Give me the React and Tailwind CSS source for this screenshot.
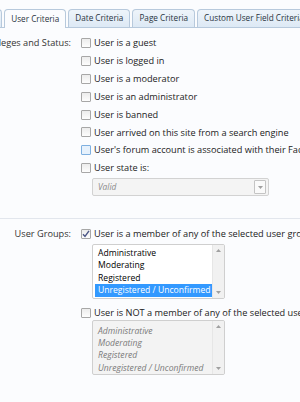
import React from 'react';

const font = { fontFamily: '"Open Sans", "Noto Sans", sans-serif' };

const tabs = ['Options', 'User Criteria', 'Date Criteria', 'Page Criteria', 'Custom User Field Criteria'];

const statusRows = [
  'User is a guest',
  'User is logged in',
  'User is a moderator',
  'User is an administrator',
  'User is banned',
  'User arrived on this site from a search engine',
  "User's forum account is associated with their Facebook account",
  'User state is:',
];

const groups = ['Administrative', 'Moderating', 'Registered', 'Unregistered / Unconfirmed'];

function Box({ checked, hover }) {
  return (
    <span
      className={`relative flex h-[10px] w-[10px] shrink-0 items-center justify-center rounded-[1px] border ${
        hover ? 'border-[#7fb0e0] bg-[#e6f1fc]' : 'border-[#a7a7a7] bg-gradient-to-b from-[#ececec] to-[#fdfdfd]'
      }`}
    >
      {checked && (
        <svg width="8" height="8" viewBox="0 0 8 8" className="absolute">
          <path d="M1 4.2 L3 6.4 L7 0.8" fill="none" stroke="#4a5585" strokeWidth="1.4" />
        </svg>
      )}
    </span>
  );
}

function Row({ label, checked, hover }) {
  return (
    <div className="flex h-[17.9px] items-center gap-[3px] whitespace-nowrap">
      <Box checked={checked} hover={hover} />
      <span>{label}</span>
    </div>
  );
}

function Arrow({ up }) {
  return (
    <svg width="5" height="3" viewBox="0 0 5 3">
      <path d={up ? 'M0 3 L2.5 0 L5 3 Z' : 'M0 0 L2.5 3 L5 0 Z'} fill="#a0a0a0" />
    </svg>
  );
}

function ListBox({ disabled }) {
  return (
    <div
      className={`flex h-[55px] w-[133px] overflow-hidden rounded-[2px] border border-[#cfcfcf] ${
        disabled ? 'bg-[#f3f3f3]' : 'bg-white'
      }`}
    >
      <div className={`flex-1 pl-[2px] text-[8.6px] ${disabled ? 'pt-[4px] italic text-[#7a7a7a]' : 'pt-[2px] text-black'}`}>
        {groups.map((g, i) => (
          <div
            key={g}
            className={`flex h-[12.4px] items-center pl-[3px] whitespace-nowrap ${
              !disabled && i === 3 ? 'bg-[#3399ff] text-white' : ''
            }`}
          >
            {g}
          </div>
        ))}
      </div>
      <div className="flex w-[12px] flex-col items-center justify-between border-l border-[#e6e6e6] bg-[#f1f1f1] py-[4px]">
        <Arrow up />
        <Arrow />
      </div>
    </div>
  );
}

export default function App() {
  return (
    <div className="h-[402px] w-[300px] overflow-hidden bg-[#fbfcfe] text-[9.2px] text-[#222]" style={font}>
      <div className="flex h-[28px] items-end border-b border-[#b7c9dc] pt-[10px]">
        <div className="ml-[-42px] flex gap-[2px]">
          {tabs.map((t, i) => (
            <div
              key={t}
              className={`flex h-[18px] items-center whitespace-nowrap rounded-t-[4px] border border-[#b7c9dc] px-[6px] text-[8.2px] text-[#2a3441] ${
                i === 1 ? 'mb-[-1px] h-[19px] border-b-0 bg-[#fbfcfe]' : 'border-b-0 bg-gradient-to-b from-[#eef4fa] to-[#dde9f5]'
              }`}
            >
              {t}
            </div>
          ))}
        </div>
      </div>

      <div className="flex gap-[10px] pt-[6px]">
        <div className="flex h-[17.9px] w-[71px] shrink-0 items-center justify-end whitespace-nowrap text-[#333]">
          Privileges and Status:
        </div>
        <div className="flex flex-col">
          {statusRows.map((r, i) => (
            <Row key={r} label={r} hover={i === 6} />
          ))}
          <div className="ml-[11px] mt-[1px] flex h-[18px] w-[177px] items-center justify-between rounded-[2px] border border-[#d2d2d2] bg-[#f4f4f4] pl-[5px] pr-[2px]">
            <span className="text-[8.4px] italic text-[#8a8a8a]">Valid</span>
            <span className="flex h-[14px] w-[12px] items-center justify-center rounded-[1px] border border-[#c4c4c4] bg-[#fafafa]">
              <Arrow />
            </span>
          </div>
        </div>
      </div>

      <div className="mt-[22px] border-t border-[#e2e6ed]" />

      <div className="flex gap-[10px] pt-[6px]">
        <div className="flex h-[17.9px] w-[71px] shrink-0 items-center justify-end whitespace-nowrap text-[#333]">
          User Groups:
        </div>
        <div className="flex flex-col">
          <Row label="User is a member of any of the selected user groups:" checked />
          <div className="ml-[11px] mt-[1px]">
            <ListBox />
          </div>
          <div className="mt-[5px]">
            <Row label="User is NOT a member of any of the selected user groups:" />
          </div>
          <div className="ml-[11px] mt-[-2px]">
            <ListBox disabled />
          </div>
        </div>
      </div>
    </div>
  );
}
